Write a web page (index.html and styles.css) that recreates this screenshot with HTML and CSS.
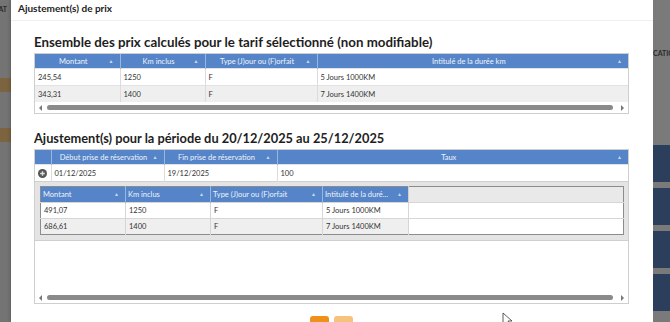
FILE: index.html
```html
<!DOCTYPE html>
<html lang="fr">
<head>
    <meta charset="UTF-8">
    <title>Ajustement(s) de prix</title>
    <link rel="stylesheet" href="styles.css">
</head>
<body>
    <div class="page">
        <div class="backdrop-left">
            <div class="bg-label">RAT</div>
            <div class="bg-band band-1"></div>
            <div class="bg-band band-2"></div>
        </div>

        <div class="modal">
            <div class="modal-header">Ajustement(s) de prix</div>
            <div class="modal-body">
                <h3>Ensemble des prix calculés pour le tarif sélectionné (non modifiable)</h3>
                <div class="grid">
                    <table class="grid-table">
                        <colgroup>
                            <col style="width: 85px">
                            <col style="width: 85px">
                            <col style="width: 112px">
                            <col>
                        </colgroup>
                        <thead>
                            <tr>
                                <th>Montant<span class="sort">▲</span></th>
                                <th>Km inclus<span class="sort">▲</span></th>
                                <th>Type (J)our ou (F)orfait<span class="sort">▲</span></th>
                                <th>Intitulé de la durée km<span class="sort">▲</span></th>
                            </tr>
                        </thead>
                        <tbody>
                            <tr><td>245,54</td><td>1250</td><td>F</td><td>5 Jours 1000KM</td></tr>
                            <tr class="alt"><td>343,31</td><td>1400</td><td>F</td><td>7 Jours 1400KM</td></tr>
                        </tbody>
                    </table>
                    <div class="hscroll">
                        <span class="arrow-left"></span>
                        <span class="thumb"></span>
                        <span class="arrow-right"></span>
                    </div>
                </div>

                <h3 class="second">Ajustement(s) pour la période du 20/12/2025 au 25/12/2025</h3>
                <div class="grid">
                    <table class="grid-table">
                        <colgroup>
                            <col style="width: 16px">
                            <col style="width: 113px">
                            <col style="width: 113px">
                            <col>
                        </colgroup>
                        <thead>
                            <tr>
                                <th></th>
                                <th>Début prise de réservation<span class="sort">▲</span></th>
                                <th>Fin prise de réservation<span class="sort">▲</span></th>
                                <th>Taux<span class="sort">▲</span></th>
                            </tr>
                        </thead>
                        <tbody>
                            <tr>
                                <td class="expander">
                                    <svg width="9" height="9" viewBox="0 0 10 10">
                                        <circle cx="5" cy="5" r="5" fill="#555"/>
                                        <path d="M5 2.4v5.2M2.4 5h5.2" stroke="#ddd" stroke-width="1.6"/>
                                    </svg>
                                </td>
                                <td>01/12/2025</td>
                                <td>19/12/2025</td>
                                <td>100</td>
                            </tr>
                            <tr class="detail">
                                <td colspan="4">
                                    <table class="sub-table">
                                        <colgroup>
                                            <col style="width: 85px">
                                            <col style="width: 85px">
                                            <col style="width: 112px">
                                            <col style="width: 86px">
                                            <col>
                                        </colgroup>
                                        <thead>
                                            <tr>
                                                <th>Montant<span class="sort">▲</span></th>
                                                <th>Km inclus<span class="sort">▲</span></th>
                                                <th>Type (J)our ou (F)orfait<span class="sort">▲</span></th>
                                                <th>Intitulé de la duré...<span class="sort">▲</span></th>
                                                <th class="filler"></th>
                                            </tr>
                                        </thead>
                                        <tbody>
                                            <tr><td>491,07</td><td>1250</td><td>F</td><td>5 Jours 1000KM</td><td class="filler"></td></tr>
                                            <tr class="alt"><td>686,61</td><td>1400</td><td>F</td><td>7 Jours 1400KM</td><td class="filler"></td></tr>
                                        </tbody>
                                    </table>
                                </td>
                            </tr>
                        </tbody>
                    </table>
                    <div class="grid-empty"></div>
                    <div class="hscroll">
                        <span class="arrow-left"></span>
                        <span class="thumb"></span>
                        <span class="arrow-right"></span>
                    </div>
                </div>

                <div class="footer">
                    <span class="btn"></span>
                    <span class="btn light"></span>
                </div>
            </div>
        </div>

        <div class="backdrop-right">
            <div class="bg-label">CATIO</div>
            <div class="bg-block first"></div>
            <div class="bg-block"></div>
            <div class="bg-block"></div>
            <div class="bg-block"></div>
        </div>
    </div>

    <svg class="cursor" width="12" height="16" viewBox="0 0 12 16">
        <path d="M1 1v12l3-3 2.5 5 2-1-2.5-5h4z" fill="#fff" stroke="#333" stroke-width="0.8"/>
    </svg>
</body>
</html>
```

FILE: styles.css
```css
body {
    margin: 0;
    width: 670px;
    height: 322px;
    overflow: hidden;
    background-color: #757575;
    font-family: Lato, "Open Sans", sans-serif;
    position: relative;
}
.page {
    display: flex;
    height: 322px;
    overflow: hidden;
}
.backdrop-left {
    width: 11px;
    flex-shrink: 0;
    background-color: #747474;
    overflow: hidden;
}
.backdrop-right {
    width: 17px;
    flex-shrink: 0;
    background-color: #7a7a7a;
    overflow: hidden;
}
.bg-label {
    font-size: 7px;
    font-weight: bold;
    color: #2a2a2a;
    margin-top: 5px;
    white-space: nowrap;
    margin-left: -6px;
}
.backdrop-right .bg-label {
    margin-top: 49px;
    margin-left: 0;
}
.bg-band {
    height: 14px;
    background-color: #7d6440;
}
.band-1 {
    margin-top: 65px;
}
.band-2 {
    margin-top: 36px;
}
.bg-block {
    height: 37px;
    margin-top: 6px;
    background-color: #2b3e5c;
}
.bg-block.first {
    margin-top: 88px;
}
.modal {
    width: 642px;
    flex-shrink: 0;
    background: white;
    box-shadow: 0 0 4px rgba(0, 0, 0, 0.3);
}
.modal-header {
    height: 20px;
    line-height: 17px;
    padding-left: 7px;
    font-size: 10px;
    font-weight: bold;
    color: #222;
    border-bottom: 1px solid #efefef;
}
.modal-body {
    padding: 0 24px 0 23px;
}
h3 {
    margin: 12px 0 2px;
    height: 18px;
    line-height: 18px;
    font-size: 13.3px;
    font-weight: bold;
    color: #1e1e1e;
    white-space: nowrap;
}
h3.second {
    margin-top: 15px;
    font-size: 12.8px;
}
.grid {
    border: 1px solid #cfcfcf;
}
.grid-table, .sub-table {
    width: 100%;
    border-collapse: collapse;
    table-layout: fixed;
    font-size: 7.5px;
    color: #333;
}
.grid-table th {
    height: 14px;
    padding: 0 12px 0 4px;
    background-color: #5585c8;
    color: #eef3fb;
    font-weight: normal;
    text-align: center;
    border-left: 1px solid #9bb6dd;
    position: relative;
    white-space: nowrap;
    overflow: hidden;
}
.grid-table th:first-child {
    border-left: none;
}
.sort {
    position: absolute;
    right: 6px;
    top: 4px;
    font-size: 5px;
    color: #c9d8ef;
}
.grid-table td {
    height: 16px;
    padding: 0 3px;
    border-left: 1px solid #dcdcdc;
    border-top: 1px solid #e2e2e2;
    white-space: nowrap;
    overflow: hidden;
}
.grid-table td:first-child {
    border-left: none;
}
.grid-table tr.alt td {
    background-color: #efefef;
}
.grid-table td.expander {
    text-align: center;
    padding: 0;
}
.expander svg {
    display: block;
    margin: 0 auto;
}
.grid-table tr.detail > td {
    background-color: #e4e4e4;
    padding: 4px 4px 5px 5px;
    border-top: 1px solid #cfcfcf;
    border-bottom: 1px solid #cfcfcf;
}
.sub-table {
    border: 1px solid #8c8c8c;
    background: white;
}
.sub-table th {
    height: 15px;
    padding: 0 12px 0 2px;
    background-color: #5585c8;
    color: #eef3fb;
    font-weight: normal;
    text-align: left;
    border-left: 1px solid #9bb6dd;
    position: relative;
    white-space: nowrap;
    overflow: hidden;
}
.sub-table th:first-child {
    border-left: none;
}
.sub-table th.filler {
    background-color: #e9e9e9;
    border-left: 1px solid #d0d0d0;
}
.sub-table td {
    height: 15px;
    padding: 0 3px;
    background: white;
    border-left: 1px solid #d6d6d6;
    border-top: 1px solid #d6d6d6;
    white-space: nowrap;
}
.sub-table td:first-child {
    border-left: none;
}
.sub-table tr.alt td {
    background-color: #efefef;
}
.sub-table tr.alt td.filler {
    background: white;
}
.grid-empty {
    height: 51px;
}
.hscroll {
    height: 11px;
    display: flex;
    align-items: center;
    padding: 0 4px;
    gap: 5px;
}
.arrow-left, .arrow-right {
    width: 0;
    height: 0;
    border-top: 3px solid transparent;
    border-bottom: 3px solid transparent;
}
.arrow-left {
    border-right: 3px solid #777;
}
.arrow-right {
    border-left: 3px solid #777;
}
.thumb {
    flex: 1;
    height: 5px;
    border-radius: 3px;
    background-color: #8a8a8a;
    margin-right: 3px;
}
.footer {
    display: flex;
    justify-content: center;
    gap: 5px;
    margin-top: 12px;
}
.btn {
    width: 19px;
    height: 19px;
    border-radius: 3px;
    background-color: #f0901c;
}
.btn.light {
    background-color: #f7c27c;
}
.cursor {
    position: absolute;
    left: 502px;
    top: 312px;
}
```
